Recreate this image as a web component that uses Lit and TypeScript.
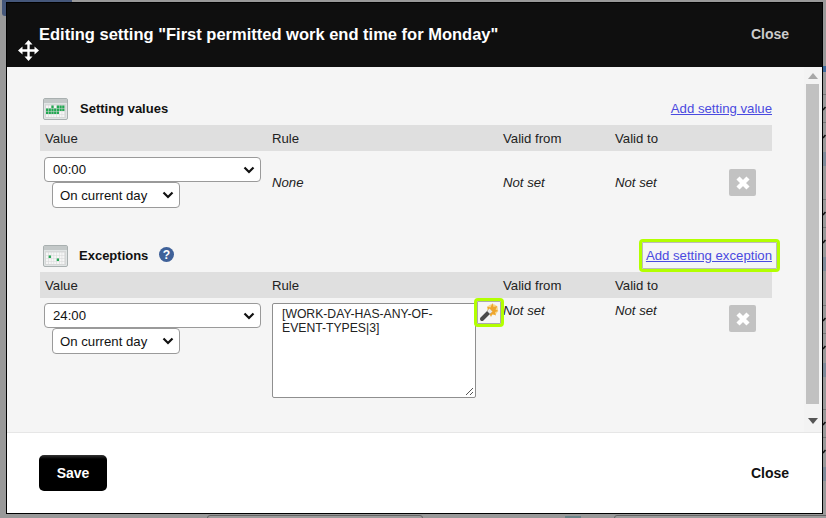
import { LitElement, html, css, svg } from "lit";
import { customElement } from "lit/decorators.js";

const calendar = (cells: [number, number][], fill: boolean) => {
  const rects = [];
  for (let r = 0; r < 4; r++) {
    for (let c = 0; c < 7; c++) {
      const on = fill
        ? (r === 0 && c > 1 && c !== 3) || r === 1 || (r === 2 && c < 5)
        : cells.some(([a, b]) => a === r && b === c);
      rects.push(svg`<rect x=${3 + c * 2.7} y=${7.500 + r * 3} width="2.2" height="2.500" fill=${on ? "#22a852" : "#f6f6f6"} />`);
    }
  }
  return html`<svg class="cal" width="25" height="22" viewBox="0 0 25 22">
    <rect x=".5" y=".5" width="24" height="21" rx="1.500" fill="#e1e5e5" stroke="#a9b0b0" />
    <rect x="1" y="1" width="23" height="4" fill="#c3c8c8" />
    <rect x="2" y="6" width="21" height="14" fill="#d6d8d8" />
    ${rects}
  </svg>`;
};

const STRIP_STARTS = [0, 105, 211, 315];

@customElement("app-root")
export class AppRoot extends LitElement {
  static styles = css`
    :host {
      display: block;
      position: relative;
      width: 826px;
      height: 518px;
      box-sizing: border-box;
      padding: 2px 3px 4px 6px;
      background: #999;
      overflow: hidden;
      font-family: "Liberation Sans", Arial, sans-serif;
      font-size: 13.2px;
      color: #111;
    }
    .back-tab {
      position: absolute; left: 2px; top: 0; width: 70px; height: 16px;
      background: #45577a; border-radius: 0 0 0 3px;
    }
    .back-box {
      position: absolute; left: 207px; top: 515px; width: 214px; height: 8px;
      background: #9c9c9c; border: 1px solid #666; border-radius: 3px;
    }
    .back-box.two { left: 614px; width: 240px; }
    .back-chip { position: absolute; left: 565px; top: 516px; width: 16px; height: 4px; background: #6b8488; }
    .strip { position: absolute; left: 823px; top: 60px; }
    .modal {
      position: relative;
      height: 100%;
      box-sizing: border-box;
      border: 1px solid #000;
      background: #fff;
      display: flex;
      flex-direction: column;
    }
    .head {
      flex: none;
      height: 64px;
      background: #0f0f0f;
      display: flex;
      align-items: flex-start;
      justify-content: space-between;
      padding: 21px 33px 0 32px;
      box-sizing: border-box;
    }
    .title { color: #fff; font-size: 16.5px; font-weight: 700; line-height: 20px; }
    .close { color: #ccc; font-size: 14px; font-weight: 700; line-height: 20px; }
    .move { position: absolute; left: 11px; top: 37px; }
    .body {
      flex: none;
      height: 365px;
      background: #f5f5f5;
      border-bottom: 1px solid #e6e6e6;
      display: flex;
    }
    .content { flex: 1; min-width: 0; padding: 31px 32px 0 33px; }
    .scroll {
      flex: none; width: 18px; display: flex; flex-direction: column; align-items: center;
      background: #f3f3f3;
    }
    .arrow { flex: none; height: 17px; display: flex; align-items: center; justify-content: center; }
    .arrow.down { margin-bottom: 3px; }
    .thumb { width: 13px; flex: 1; background: #c1c1c1; margin: 0 1px 8px 0; }
    .section-head {
      display: flex; align-items: flex-start; height: 27px; padding-left: 3px; line-height: 22px;
    }
    .name { font-size: 13px; font-weight: 700; margin-left: 12px; color: #111; }
    .name.exc { margin-left: 11px; }
    .help { margin: 2px 0 0 11px; }
    .link { margin-left: auto; color: #4a4ae0; text-decoration: underline; font-size: 13.2px; }
    .highlight {
      margin: -6px -8px 0 auto; border: 3px solid #b2ff00; border-radius: 4px;
      height: 33px; box-sizing: border-box; padding: 0 5px 0 4px;
      display: flex; align-items: center;
      box-shadow: 0 0 0 1px #bbb inset;
    }
    .highlight .link { margin: 0; }
    .row { display: grid; grid-template-columns: 232px 231px 112px 113px 1fr; }
    .thead { background: #dfdfdf; height: 26px; align-items: center; }
    .thead div { color: #222; }
    .thead div:first-child { padding-left: 5px; }
    .cell-value { padding: 6px 0 0 4px; display: flex; flex-direction: column; align-items: flex-start; }
    .cell-value.second { padding-top: 5px; }
    .short { height: 84px; }
    .tall { height: 100px; }
    .gap { height: 10px; }
    .sel {
      background: #fff; border: 1px solid #9a9a9a; border-radius: 4px; box-sizing: border-box;
      height: 25px; padding: 0 0 0 8px; display: flex; align-items: center; justify-content: space-between;
    }
    .sel svg { margin-right: 5px; }
    .sel.wide { width: 217px; }
    .sel.narrow { width: 128px; height: 26px; margin-left: 8px; padding-left: 7px; }
    .it { font-style: italic; color: #222; }
    .mid { padding-top: 24px; }
    .top { padding-top: 5px; }
    .rule-cell { padding-top: 5px; position: relative; }
    .area {
      width: 204px; height: 95px; box-sizing: border-box; background: #fff;
      border: 1px solid #8f8f8f; border-radius: 2px; padding: 3px 9px; font-size: 12.2px;
      line-height: 14px; color: #222; position: relative;
    }
    .grip { position: absolute; right: 1px; bottom: 1px; }
    .wand {
      position: absolute; left: 202px; top: 0; width: 30px; height: 29px; box-sizing: border-box;
      border: 3px solid #b2ff00; border-radius: 4px; box-shadow: 0 0 0 1px #aaa inset; background: #f5f5f5;
      display: flex; align-items: center; justify-content: center;
    }
    .x {
      width: 27px; height: 27px; background: #c2c2c2; border-radius: 2px; margin-left: 1px;
      display: flex; align-items: center; justify-content: center;
    }
    .x-cell { padding-top: 18px; }
    .x-cell.t { padding-top: 7px; }
    .foot {
      flex: 1; display: flex; align-items: center; justify-content: space-between;
      padding: 0 33px 0 32px; background: #fff;
    }
    .save {
      width: 68px; height: 36px; border-radius: 5px; color: #fff; font-size: 14px; font-weight: 700;
      background: linear-gradient(#333 0, #000 4px); display: flex; align-items: center; justify-content: center;
    }
    .foot .close { color: #111; }
  `;

  chevron() {
    return html`<svg width="12" height="8" viewBox="0 0 12 8"><path d="M1.500 1.500 6 6l4.500-4.500" fill="none" stroke="#111" stroke-width="2.200" /></svg>`;
  }

  x() {
    return html`<div class="x"><svg width="16" height="16" viewBox="0 0 16 16"><path d="M3 3l10 10M13 3 3 13" stroke="#fff" stroke-width="4.400" /></svg></div>`;
  }

  selects(v: string, second: boolean) {
    return html`<div class="cell-value ${second ? "second" : ""}">
      <div class="sel wide"><span>${v}</span>${this.chevron()}</div>
      <div class="sel narrow"><span>On current day</span>${this.chevron()}</div>
    </div>`;
  }

  strip() {
    return html`<svg class="strip" width="3" height="440" viewBox="0 0 3 440">
      <rect x="0" y="6" width="3" height="6" fill="#3d6a9c" />
      ${STRIP_STARTS.map(
        (s) => svg`
          <rect x="0" y=${s + 34} width="3" height="1" fill="#777" />
          <path d=${`M0 ${s + 50}l2.500-3`} stroke="#111" stroke-width="1.500" />
          <rect x="0" y=${s + 62} width="3" height="1" fill="#777" />
          <path d=${`M0 ${s + 78}l2.500-3`} stroke="#111" stroke-width="1.500" />
          <rect x="0" y=${s + 92} width="3" height="14" fill="#7d8a99" />
        `,
      )}
    </svg>`;
  }

  render() {
    return html`
      <div class="back-tab"></div>
      <div class="back-box"></div>
      <div class="back-box two"></div>
      <div class="back-chip"></div>
      ${this.strip()}
      <div class="modal">
        <div class="head">
          <div class="title">Editing setting "First permitted work end time for Monday"</div>
          <div class="close">Close</div>
        </div>
        <svg class="move" width="21" height="21" viewBox="0.5 0.5 21 21">
          <path d="M11 .5 15 5h-2.800v4.800H17V7l4.500 4-4.500 4v-2.800h-4.800V17H15l-4 4.500L7 17h2.800v-4.800H5V15L.5 11 5 7v2.800h4.800V5H7z" fill="#fff" />
        </svg>
        <div class="body">
          <div class="content">
            <div class="section-head">
              ${calendar([], true)}
              <span class="name">Setting values</span>
              <a class="link">Add setting value</a>
            </div>
            <div class="row thead"><div>Value</div><div>Rule</div><div>Valid from</div><div>Valid to</div><div></div></div>
            <div class="row short">
              ${this.selects("00:00", false)}
              <div class="it mid">None</div>
              <div class="it mid">Not set</div>
              <div class="it mid">Not set</div>
              <div class="x-cell">${this.x()}</div>
            </div>
            <div class="gap"></div>
            <div class="section-head">
              ${calendar([[1, 1], [2, 4]], false)}
              <span class="name exc">Exceptions</span>
              <svg class="help" width="15" height="15" viewBox="0 0 16 16"><circle cx="8" cy="8" r="8" fill="#3f6199" /><text x="8" y="12.800" text-anchor="middle" font-size="13" font-weight="700" font-family="Liberation Sans" fill="#fff">?</text></svg>
              <div class="highlight"><a class="link">Add setting exception</a></div>
            </div>
            <div class="row thead"><div>Value</div><div>Rule</div><div>Valid from</div><div>Valid to</div><div></div></div>
            <div class="row tall">
              ${this.selects("24:00", true)}
              <div class="rule-cell">
                <div class="area">[WORK-DAY-HAS-ANY-OF-EVENT-TYPES|3]
                  <svg class="grip" width="10" height="10" viewBox="0 0 10 10"><path d="M9 2 2 9M9 6 6 9" stroke="#555" stroke-width="1" /></svg>
                </div>
                <div class="wand">
                  <svg width="20" height="20" viewBox="0 0 20 20">
                    <circle cx="13.500" cy="6.500" r="5.500" fill="#f7d98a" />
                    <path d="M13.500 0l1 4 4-1-2 3.500 3 1.500-3.500 1 1 3.500-3.500-1.500-1.500 3-1.500-3-3-1 2-3-1.500-3.500 3.500 1z" fill="#eea62f" />
                    <path d="M10.500 8.500 3 16" stroke="#4a4a4a" stroke-width="4" stroke-linecap="round" />
                    <path d="M12 7 9.500 9.500" stroke="#e8e8e8" stroke-width="4" />
                  </svg>
                </div>
              </div>
              <div class="it top">Not set</div>
              <div class="it top">Not set</div>
              <div class="x-cell t">${this.x()}</div>
            </div>
          </div>
          <div class="scroll">
            <div class="arrow"><svg width="10" height="6" viewBox="0 0 10 6"><path d="M5 0l5 6H0z" fill="#a8a8a8" /></svg></div>
            <div class="thumb"></div>
            <div class="arrow down"><svg width="10" height="6" viewBox="0 0 10 6"><path d="M0 0h10L5 6z" fill="#555" /></svg></div>
          </div>
        </div>
        <div class="foot">
          <div class="save">Save</div>
          <div class="close">Close</div>
        </div>
      </div>
    `;
  }
}
